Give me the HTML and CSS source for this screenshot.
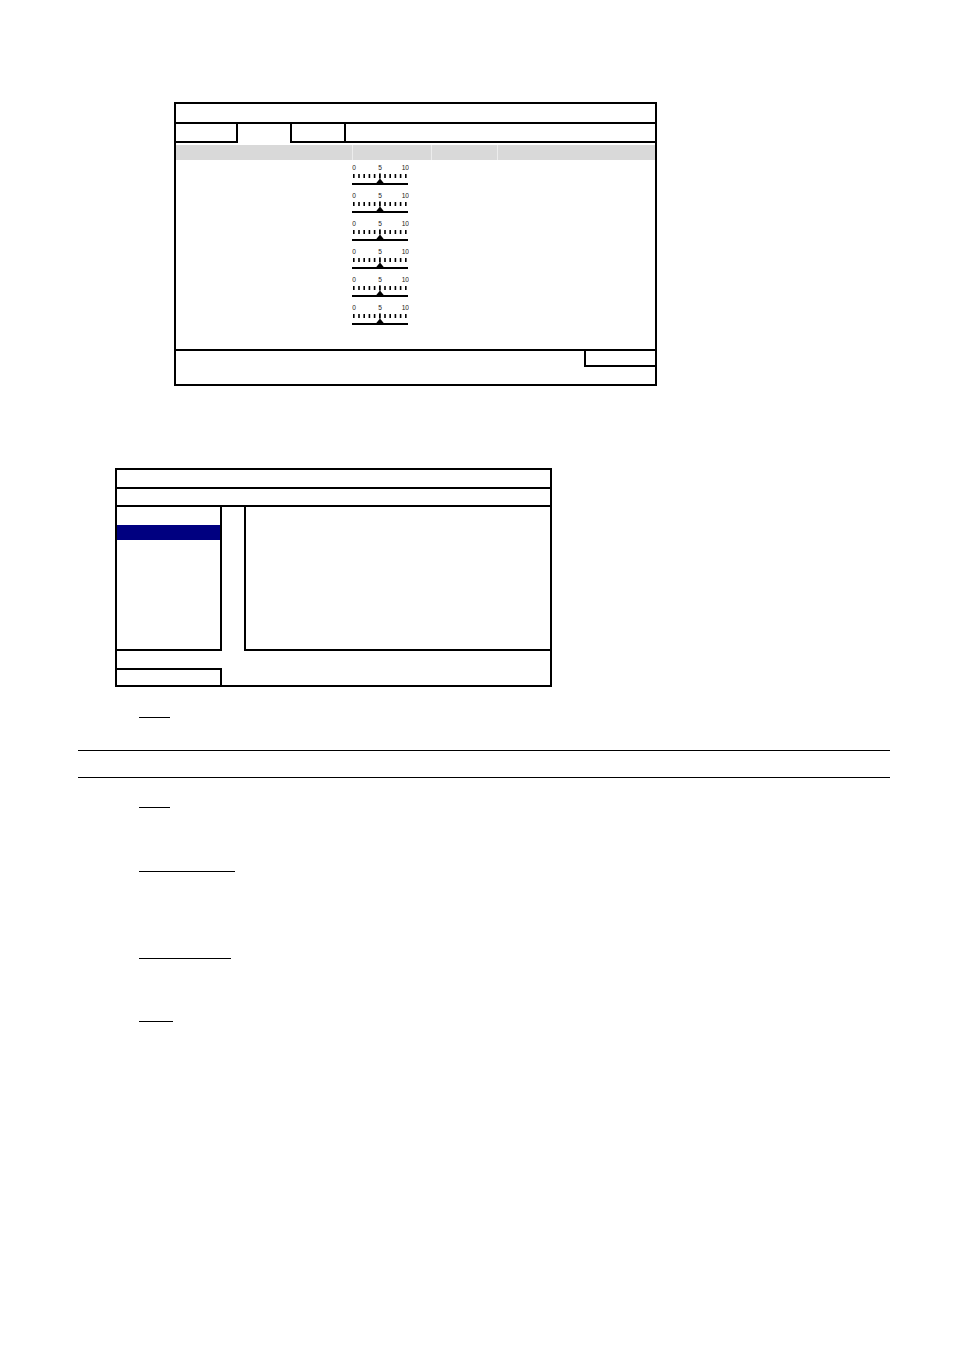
FILE: index.html
```html
<!DOCTYPE html>
<html>
<head>
<meta charset="utf-8">
<link rel="stylesheet" href="styles.css">
</head>
<body>
<div class="page">
  <div class="win1">
    <div class="w1-title"></div>
    <div class="w1-tabs">
      <div class="tab t1"></div>
      <div class="tab t2 active"></div>
      <div class="tab t3"></div>
      <div class="tab-rest"></div>
    </div>
    <div class="w1-head">
      <div class="hc c1"></div>
      <div class="hc c2"></div>
      <div class="hc c3"></div>
      <div class="hc c4"></div>
    </div>
    <div class="w1-body">
      <div class="sliders">
        <svg class="slider" viewBox="0 0 57 28" width="57" height="28"><text x="0.3" y="5.5" class="d">0</text><text x="28" y="5.5" class="d m">5</text><text x="57" y="5.5" class="d e">10</text><g class="ticks"><rect x="1" y="10" width="1.6" height="4"/><rect x="6.2" y="10" width="1.6" height="4"/><rect x="11.4" y="10" width="1.6" height="4"/><rect x="16.6" y="10" width="1.6" height="4"/><rect x="21.8" y="10" width="1.6" height="4"/><rect x="27" y="9.5" width="1.8" height="5"/><rect x="32.2" y="10" width="1.6" height="4"/><rect x="37.4" y="10" width="1.6" height="4"/><rect x="42.6" y="10" width="1.6" height="4"/><rect x="47.8" y="10" width="1.6" height="4"/><rect x="53" y="10" width="1.6" height="4"/></g><polygon points="28,14.5 23.5,20 32.5,20"/><rect x="0" y="19" width="56" height="2"/></svg>
        <svg class="slider" viewBox="0 0 57 28" width="57" height="28"><text x="0.3" y="5.5" class="d">0</text><text x="28" y="5.5" class="d m">5</text><text x="57" y="5.5" class="d e">10</text><g class="ticks"><rect x="1" y="10" width="1.6" height="4"/><rect x="6.2" y="10" width="1.6" height="4"/><rect x="11.4" y="10" width="1.6" height="4"/><rect x="16.6" y="10" width="1.6" height="4"/><rect x="21.8" y="10" width="1.6" height="4"/><rect x="27" y="9.5" width="1.8" height="5"/><rect x="32.2" y="10" width="1.6" height="4"/><rect x="37.4" y="10" width="1.6" height="4"/><rect x="42.6" y="10" width="1.6" height="4"/><rect x="47.8" y="10" width="1.6" height="4"/><rect x="53" y="10" width="1.6" height="4"/></g><polygon points="28,14.5 23.5,20 32.5,20"/><rect x="0" y="19" width="56" height="2"/></svg>
        <svg class="slider" viewBox="0 0 57 28" width="57" height="28"><text x="0.3" y="5.5" class="d">0</text><text x="28" y="5.5" class="d m">5</text><text x="57" y="5.5" class="d e">10</text><g class="ticks"><rect x="1" y="10" width="1.6" height="4"/><rect x="6.2" y="10" width="1.6" height="4"/><rect x="11.4" y="10" width="1.6" height="4"/><rect x="16.6" y="10" width="1.6" height="4"/><rect x="21.8" y="10" width="1.6" height="4"/><rect x="27" y="9.5" width="1.8" height="5"/><rect x="32.2" y="10" width="1.6" height="4"/><rect x="37.4" y="10" width="1.6" height="4"/><rect x="42.6" y="10" width="1.6" height="4"/><rect x="47.8" y="10" width="1.6" height="4"/><rect x="53" y="10" width="1.6" height="4"/></g><polygon points="28,14.5 23.5,20 32.5,20"/><rect x="0" y="19" width="56" height="2"/></svg>
        <svg class="slider" viewBox="0 0 57 28" width="57" height="28"><text x="0.3" y="5.5" class="d">0</text><text x="28" y="5.5" class="d m">5</text><text x="57" y="5.5" class="d e">10</text><g class="ticks"><rect x="1" y="10" width="1.6" height="4"/><rect x="6.2" y="10" width="1.6" height="4"/><rect x="11.4" y="10" width="1.6" height="4"/><rect x="16.6" y="10" width="1.6" height="4"/><rect x="21.8" y="10" width="1.6" height="4"/><rect x="27" y="9.5" width="1.8" height="5"/><rect x="32.2" y="10" width="1.6" height="4"/><rect x="37.4" y="10" width="1.6" height="4"/><rect x="42.6" y="10" width="1.6" height="4"/><rect x="47.8" y="10" width="1.6" height="4"/><rect x="53" y="10" width="1.6" height="4"/></g><polygon points="28,14.5 23.5,20 32.5,20"/><rect x="0" y="19" width="56" height="2"/></svg>
        <svg class="slider" viewBox="0 0 57 28" width="57" height="28"><text x="0.3" y="5.5" class="d">0</text><text x="28" y="5.5" class="d m">5</text><text x="57" y="5.5" class="d e">10</text><g class="ticks"><rect x="1" y="10" width="1.6" height="4"/><rect x="6.2" y="10" width="1.6" height="4"/><rect x="11.4" y="10" width="1.6" height="4"/><rect x="16.6" y="10" width="1.6" height="4"/><rect x="21.8" y="10" width="1.6" height="4"/><rect x="27" y="9.5" width="1.8" height="5"/><rect x="32.2" y="10" width="1.6" height="4"/><rect x="37.4" y="10" width="1.6" height="4"/><rect x="42.6" y="10" width="1.6" height="4"/><rect x="47.8" y="10" width="1.6" height="4"/><rect x="53" y="10" width="1.6" height="4"/></g><polygon points="28,14.5 23.5,20 32.5,20"/><rect x="0" y="19" width="56" height="2"/></svg>
        <svg class="slider" viewBox="0 0 57 28" width="57" height="28"><text x="0.3" y="5.5" class="d">0</text><text x="28" y="5.5" class="d m">5</text><text x="57" y="5.5" class="d e">10</text><g class="ticks"><rect x="1" y="10" width="1.6" height="4"/><rect x="6.2" y="10" width="1.6" height="4"/><rect x="11.4" y="10" width="1.6" height="4"/><rect x="16.6" y="10" width="1.6" height="4"/><rect x="21.8" y="10" width="1.6" height="4"/><rect x="27" y="9.5" width="1.8" height="5"/><rect x="32.2" y="10" width="1.6" height="4"/><rect x="37.4" y="10" width="1.6" height="4"/><rect x="42.6" y="10" width="1.6" height="4"/><rect x="47.8" y="10" width="1.6" height="4"/><rect x="53" y="10" width="1.6" height="4"/></g><polygon points="28,14.5 23.5,20 32.5,20"/><rect x="0" y="19" width="56" height="2"/></svg>
      </div>
    </div>
    <div class="w1-foot">
      <div class="foot-btn"></div>
    </div>
  </div>

  <div class="win2">
    <div class="w2-title"></div>
    <div class="w2-row"></div>
    <div class="w2-mid">
      <div class="w2-list">
        <div class="w2-sel"></div>
      </div>
      <div class="w2-pane"></div>
    </div>
    <div class="w2-foot">
      <div class="w2-footbox"></div>
    </div>
  </div>

  <div class="ul ul1"></div>
  <div class="rule rule1"></div>
  <div class="rule rule2"></div>
  <div class="ul ul2"></div>
  <div class="ul ul3"></div>
  <div class="ul ul4"></div>
  <div class="ul ul5"></div>
</div>
</body>
</html>
```

FILE: styles.css
```css
html, body {
  margin: 0;
  padding: 0;
  background: #fff;
  font-family: "Liberation Sans", Arial, sans-serif;
}

.page {
  width: 954px;
  min-height: 1350px;
  padding-top: 102px;
  box-sizing: border-box;
}

/* ---------- window 1 ---------- */
.win1 {
  margin-left: 174px;
  width: 483px;
  height: 284px;
  border: 2px solid #000;
  box-sizing: border-box;
  display: flex;
  flex-direction: column;
}

.w1-title {
  height: 18px;
  border-bottom: 2px solid #000;
  flex: none;
}

.w1-tabs {
  display: flex;
  height: 19px;
  flex: none;
}

.tab {
  box-sizing: border-box;
  border-right: 2px solid #000;
  border-bottom: 2px solid #000;
  height: 19px;
}
.tab.t1 { width: 62px; }
.tab.t2 { width: 54px; }
.tab.t3 { width: 54px; }
.tab.active { border-bottom: none; }

.tab-rest {
  flex: 1;
  box-sizing: border-box;
  border-bottom: 2px solid #000;
  height: 19px;
}

.w1-head {
  margin-top: 2px;
  height: 15px;
  display: flex;
  background: #d9d9d9;
  flex: none;
}
.hc { height: 15px; box-sizing: border-box; }
.hc.c1 { width: 176px; }
.hc.c2 { width: 79px; border-left: 1px solid #ececec; }
.hc.c3 { width: 66px; border-left: 1px solid #ececec; }
.hc.c4 { flex: 1; border-left: 1px solid #ececec; }

.w1-body {
  height: 189px;
  flex: none;
  padding-left: 176px;
  padding-top: 4px;
  box-sizing: border-box;
}

.sliders {
  display: flex;
  flex-direction: column;
}

.slider {
  display: block;
  fill: #000;
}
.slider .d {
  font-family: "Liberation Sans", Arial, sans-serif;
  font-size: 6.6px;
  fill: #222;
}
.slider .d.m { text-anchor: middle; }
.slider .d.e { text-anchor: end; }

.w1-foot {
  flex: 1;
  border-top: 2px solid #000;
  display: flex;
  justify-content: flex-end;
  align-items: flex-start;
}

.foot-btn {
  width: 71px;
  height: 16px;
  box-sizing: border-box;
  border-left: 2px solid #000;
  border-bottom: 2px solid #000;
}

/* ---------- window 2 ---------- */
.win2 {
  margin-top: 82px;
  margin-left: 115px;
  width: 437px;
  height: 219px;
  border: 2px solid #000;
  box-sizing: border-box;
  display: flex;
  flex-direction: column;
}

.w2-title {
  height: 17px;
  border-bottom: 2px solid #000;
  flex: none;
}

.w2-row {
  height: 16px;
  border-bottom: 2px solid #000;
  flex: none;
}

.w2-mid {
  height: 144px;
  display: flex;
  flex: none;
}

.w2-list {
  width: 105px;
  box-sizing: border-box;
  border-right: 2px solid #000;
  border-bottom: 2px solid #000;
  padding-top: 18px;
}

.w2-sel {
  height: 15px;
  background: #000080;
}

.w2-pane {
  flex: 1;
  margin-left: 22px;
  box-sizing: border-box;
  border-left: 2px solid #000;
  border-bottom: 2px solid #000;
}

.w2-foot {
  flex: 1;
  padding-top: 17px;
  box-sizing: border-box;
}

.w2-footbox {
  width: 105px;
  height: 17px;
  box-sizing: border-box;
  border-top: 2px solid #000;
  border-right: 2px solid #000;
}

/* ---------- underlines & rules ---------- */
.ul {
  margin-left: 139px;
  height: 0;
  border-top: 1px solid #000;
}
.ul1 { margin-top: 30px; width: 31px; }
.ul2 { margin-top: 29px; width: 31px; }
.ul3 { margin-top: 63px; width: 96px; }
.ul4 { margin-top: 86px; width: 92px; }
.ul5 { margin-top: 62px; width: 34px; }

.rule {
  margin-left: 78px;
  width: 812px;
  height: 0;
  border-top: 1px solid #000;
}
.rule1 { margin-top: 32px; }
.rule2 { margin-top: 26px; }
```
